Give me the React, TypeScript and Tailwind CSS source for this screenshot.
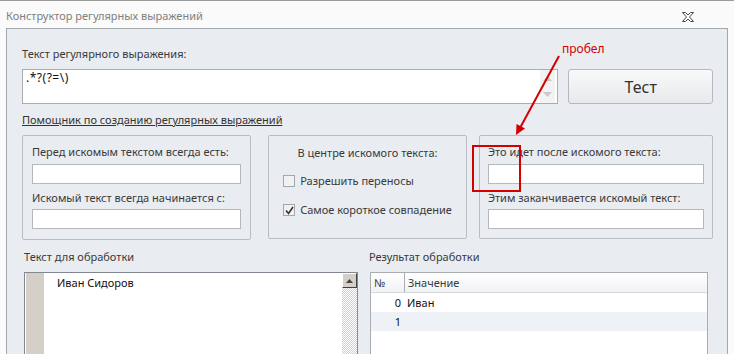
import React from "react";

const Label: React.FC<{ children: React.ReactNode; className?: string }> = ({ children, className = "" }) => (
  <div className={`h-[16px] leading-[16px] text-[11px] text-[#3a3a3a] whitespace-nowrap ${className}`}>{children}</div>
);

const Field: React.FC<{ className?: string }> = ({ className = "" }) => (
  <div className={`h-[20px] bg-white border border-[#b4b8bd] ${className}`} />
);

const CheckBox: React.FC<{ checked?: boolean; label: string }> = ({ checked, label }) => (
  <div className="flex items-center gap-[5px] h-[16px] whitespace-nowrap">
    <div className="w-[12px] h-[12px] border border-[#a3a7ab] bg-[#f1f1f1] flex items-center justify-center">
      {checked && (
        <svg width="9" height="9" viewBox="0 0 9 9">
          <path d="M1 4.5 L3.5 7.5 L8 1" fill="none" stroke="#333" strokeWidth="1.6" />
        </svg>
      )}
    </div>
    <span className="text-[11px] text-[#3a3a3a]">{label}</span>
  </div>
);

export default function App() {
  return (
    <div className="relative w-[734px] h-[354px] overflow-hidden bg-[#fafafa] border-t border-[#9b9b9b] font-['Noto_Sans',Arial,sans-serif]">
      {/* Заголовок окна */}
      <div className="h-[27px] flex items-center justify-between pl-[6px] pr-[40px]">
        <span className="text-[11px] text-[#808080] pt-[3px]">Конструктор регулярных выражений</span>
        <svg width="12" height="10" viewBox="0 0 12 10" className="mt-[4px]">
          <path
            d="M0.5 0.5 H3.5 L6 3 L8.5 0.5 H11.5 L7.5 5 L11.5 9.5 H8.5 L6 7 L3.5 9.5 H0.5 L4.5 5 Z"
            fill="#fff"
            stroke="#4a4a4a"
            strokeWidth="1"
          />
        </svg>
      </div>

      {/* Основная панель */}
      <div className="ml-[6px] mr-[6px] h-[340px] border border-[#a3a8ae] bg-[#e9ecf0] pl-[15px] pr-[14px] pt-[17px]">
        <Label>Текст регулярного выражения:</Label>
        <div className="flex gap-[10px] mt-[7px]">
          <div className="relative w-[538px] h-[35px] bg-white border border-[#a9adb2] flex">
            <span className="pl-[3px] text-[12px] leading-[16px] text-[#111] flex-1 tracking-[0.5px]">.*?(?=\)</span>
            <div className="w-[15px] mr-[2px] bg-[#f3f3f3] flex flex-col items-center justify-between py-[6px]">
              <svg width="9" height="5" viewBox="0 0 9 5"><path d="M0 5 L4.5 0 L9 5 Z" fill="#c9c9c9" /></svg>
              <svg width="9" height="5" viewBox="0 0 9 5"><path d="M0 0 L4.5 5 L9 0 Z" fill="#c9c9c9" /></svg>
            </div>
          </div>
          <button className="w-[145px] h-[35px] rounded-[3px] border border-[#b5b8bc] bg-gradient-to-b from-[#f8f9fa] to-[#e7e9ec] text-[16px] text-[#333]">
            Тест
          </button>
        </div>
        <div className="mt-[8px] text-[11px] leading-[16px] text-[#333] underline">
          Помощник по созданию регулярных выражений
        </div>

        {/* Группы */}
        <div className="flex mt-[7px]">
          <div className="w-[230px] h-[105px] border border-[#b9bdc2] rounded-[2px] px-[9px] pt-[8px]">
            <Label>Перед искомым текстом всегда есть:</Label>
            <Field className="mt-[4px]" />
            <Label className="mt-[6px]">Искомый текст всегда начинается с:</Label>
            <Field className="mt-[3px]" />
          </div>
          <div className="ml-[17px] w-[199px] h-[104px] border border-[#b9bdc2] rounded-[2px] px-[14px] pt-[9px]">
            <Label className="text-center">В центре искомого текста:</Label>
            <div className="mt-[12px] flex flex-col gap-[13px]">
              <CheckBox label="Разрешить переносы" />
              <CheckBox checked label="Самое короткое совпадение" />
            </div>
          </div>
          <div className="ml-[12px] w-[235px] h-[104px] border border-[#b9bdc2] rounded-[2px] px-[8px] pt-[8px]">
            <Label>Это идет после искомого текста:</Label>
            <Field className="mt-[4px]" />
            <Label className="mt-[6px]">Этим заканчивается искомый текст:</Label>
            <Field className="mt-[3px]" />
          </div>
        </div>

        {/* Нижняя часть */}
        <div className="flex mt-[9px]">
          <div className="ml-[2px] w-[334px]">
            <Label>Текст для обработки</Label>
            <div className="mt-[7px] h-[90px] border border-[#828790] bg-white flex">
              <div className="w-[18px] ml-[1px] bg-[#d4d0c8]" />
              <div className="flex-1 pl-[13px] pt-[2px] text-[11px] leading-[16px] text-[#111]">Иван Сидоров</div>
              <div className="w-[15px] flex flex-col">
                <div className="h-[15px] bg-[#d4d0c8] border-t border-l border-white border-r border-b border-r-[#404040] border-b-[#404040] flex items-center justify-center">
                  <svg width="7" height="4" viewBox="0 0 7 4"><path d="M0 4 L3.5 0 L7 4 Z" fill="#444" /></svg>
                </div>
                <div className="flex-1 bg-[repeating-conic-gradient(#d4d0c8_0%_25%,#ffffff_0%_50%)] bg-[length:2px_2px]" />
              </div>
            </div>
          </div>
          <div className="ml-[12px] w-[338px]">
            <Label className="-ml-[1px]">Результат обработки</Label>
            <div className="mt-[7px] h-[90px] border border-[#a9adb2] bg-white text-[11px] text-[#111]">
              <div className="h-[20px] flex bg-gradient-to-b from-[#ffffff] to-[#f1f2f4] border-b border-[#d5d8dc] text-[#3a3a3a]">
                <div className="w-[34px] border-r border-[#a9adb2] pl-[3px] leading-[20px]">№</div>
                <div className="pl-[3px] leading-[20px]">Значение</div>
              </div>
              <div className="h-[19px] flex leading-[19px]">
                <div className="w-[34px] text-right pr-[4px]">0</div>
                <div className="pl-[2px]">Иван</div>
              </div>
              <div className="h-[19px] flex leading-[19px] bg-[#eef1f6]">
                <div className="w-[34px] text-right pr-[4px]">1</div>
                <div className="pl-[2px]" />
              </div>
            </div>
          </div>
        </div>
      </div>

      {/* Аннотация */}
      <span className="absolute left-[562px] top-[40px] text-[12px] leading-[16px] text-[#d40000]">пробел</span>
      <div className="absolute left-[472px] top-[144px] w-[49px] h-[47px] border-2 border-[#d40000] pointer-events-none" />
      <svg className="absolute left-0 top-0 pointer-events-none" width="734" height="354">
        <line x1="559" y1="55" x2="520" y2="127" stroke="#d40000" strokeWidth="2" />
        <polygon points="516,134 525,127.5 516.5,123" fill="#d40000" />
      </svg>
    </div>
  );
}
